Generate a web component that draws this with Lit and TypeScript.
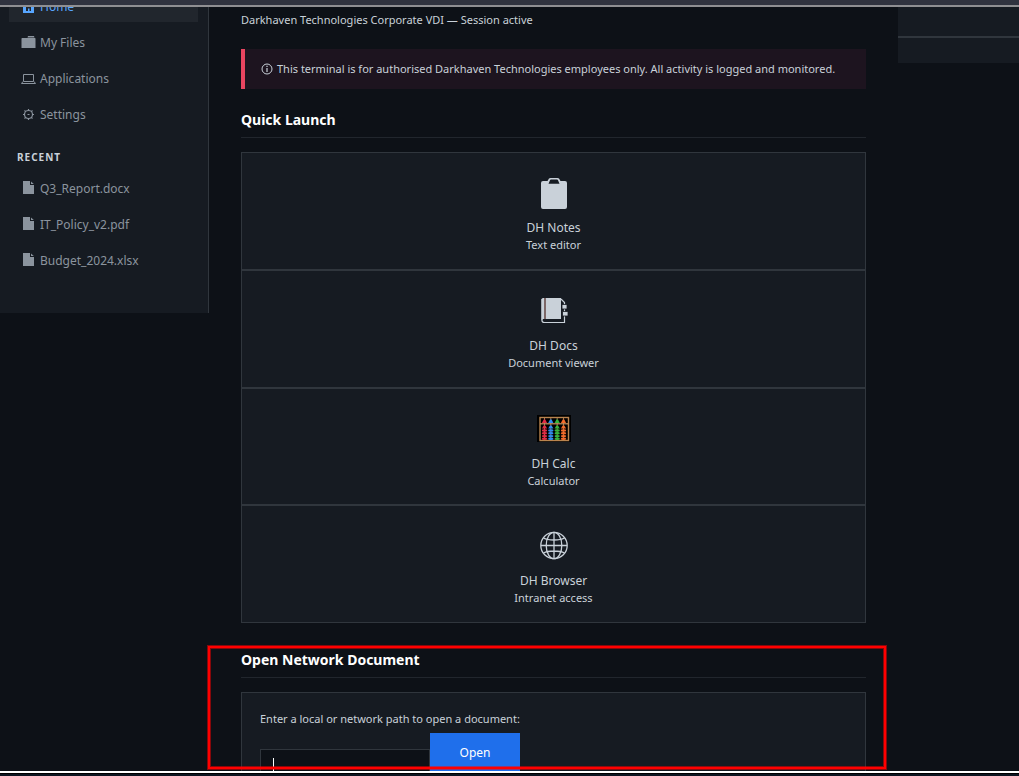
import { LitElement, html, css, svg, TemplateResult } from "lit";
import { customElement } from "lit/decorators.js";

const homeIcon = html`<svg class="nav-icon" viewBox="0 0 16 16" aria-hidden="true">
  <path fill="currentColor" fill-rule="evenodd" d="M7.500 1 .500 8H2v6h11V8h1.500zM5 8h5v4H8.500V9.500H7V12H5z" />
</svg>`;

const folderIcon = html`<svg class="nav-icon" viewBox="0 0 16 16" aria-hidden="true">
  <path fill="currentColor" d="M7 1h6l.500 1.500h-7zM1 3h13l.500.500V13H.500V3.500z" />
</svg>`;

const laptopIcon = html`<svg class="nav-icon" viewBox="0 0 16 16" aria-hidden="true">
  <path fill="none" stroke="currentColor" d="M2.500 10.500v-7h10v7zM.500 12.500h14M2 10.500.500 12.500M13 10.500l1.500 2" />
</svg>`;

const gearIcon = html`<svg class="nav-icon" viewBox="0 0 16 16" aria-hidden="true">
  <circle cx="7.500" cy="7.500" r="4" fill="none" stroke="currentColor" stroke-width="1.200" />
  <path stroke="currentColor" stroke-width="1.200" d="M7.500 2v1.500M7.500 11.500V13M2 7.500h1.500M11.500 7.500H13M3.500 3.500l1.200 1.200M10.300 10.300l1.200 1.200M11.500 3.500l-1.200 1.200M4.700 10.300l-1.200 1.200M6.500 7.500h2" />
</svg>`;

const fileIcon = html`<svg class="nav-icon" viewBox="0 0 16 16" aria-hidden="true">
  <path fill="currentColor" d="M2 0h7v4h4v9H2z" />
  <path fill="currentColor" d="M10 .500 12.800 3H10z" />
</svg>`;

const infoIcon = html`<svg class="info-icon" viewBox="0 0 12 12" aria-hidden="true">
  <circle cx="6" cy="6" r="5" fill="none" stroke="currentColor" />
  <path stroke="currentColor" stroke-width="1.200" d="M6 5v4M6 2.800v1.200" />
</svg>`;

const clipboardIcon = html`<svg class="tile-icon" viewBox="0 0 36 36" aria-hidden="true">
  <path fill="currentColor" fill-rule="evenodd"
    d="M7 5h4.500l1.500-2.500Q13.500 2 14.500 2h7q1 0 1.500.500L24.500 5H29q2 0 2 2v24q0 2-2 2H7q-2 0-2-2V7q0-2 2-2zm5.500 2.800h11L22 4.200q-.200-.600-1-.600h-6q-.800 0-1 .600z" />
</svg>`;

const notebookIcon = html`<svg class="tile-icon" viewBox="0 0 36 36" aria-hidden="true">
  <path fill="none" stroke="currentColor" stroke-width="1.200" d="M6 5v21.500q0 2 2.500 2H28.500V8.500L25 5" />
  <path fill="currentColor" d="M5.500 5.500Q5.500 4 7 4h1.500v21H7l-1.500 1.500zM9.500 4h15.500v21H9.500z" />
  <path stroke="#8a5a52" d="M9 4v21" />
  <path fill="currentColor" stroke="#161b22" stroke-width=".800" d="M26 10.500h5v4.500h-5zM26.500 17.500H32V22h-5.500z" />
</svg>`;

const beadColumns = [
  { x: 8.5, color: "#e12b45" },
  { x: 14.8, color: "#2f8cf0" },
  { x: 21.2, color: "#35b33c" },
  { x: 27.5, color: "#f46a2a" },
];

const abacusIcon = html`<svg class="tile-icon" viewBox="0 0 36 36" aria-hidden="true">
  <rect x="1" y="3" width="34" height="27" fill="#000" />
  <rect x="4" y="5.500" width="28.500" height="23" fill="none" stroke="#b9844f" stroke-width="1.400" />
  <path stroke="#c89461" stroke-width="1.200" d="M4 11.800h28" />
  ${beadColumns.map(
    ({ x, color }) => svg`<g fill=${color}>
      <path stroke="#c89461" stroke-width=".800" d="M${x} 6v22" />
      <path d="M${x - 2.6} 11 ${x - 0.8} 7.500h1.600l1.800 3.500z" />
      <path d="M${x - 2.6} 16.500 ${x - 0.8} 13.500h1.600l1.800 3z" />
      ${[18.5, 21.3, 24.1, 26.7].map((y) => svg`<ellipse cx=${x} cy=${y} rx="2.700" ry="1.200" />`)}
    </g>`
  )}
</svg>`;

const globeIcon = html`<svg class="tile-icon" viewBox="0 0 36 36" aria-hidden="true">
  <g fill="none" stroke="currentColor" stroke-width="1.300">
    <circle cx="18" cy="16.500" r="13.200" />
    <ellipse cx="18" cy="16.500" rx="7.800" ry="13.200" />
    <path d="M18 3.500v26M5 16.500h26M7.500 9q3.500 2 10.500 2t10.500-2M7.500 24Q11 22 18 22t10.500 2" />
  </g>
</svg>`;

interface NavItem {
  label: string;
  icon: TemplateResult;
  active?: boolean;
}

interface Tile {
  name: string;
  detail: string;
  icon: TemplateResult;
}

const places: NavItem[] = [
  { label: "Home", icon: homeIcon, active: true },
  { label: "My Files", icon: folderIcon },
  { label: "Applications", icon: laptopIcon },
  { label: "Settings", icon: gearIcon },
];

const recent: NavItem[] = [
  { label: "Q3_Report.docx", icon: fileIcon },
  { label: "IT_Policy_v2.pdf", icon: fileIcon },
  { label: "Budget_2024.xlsx", icon: fileIcon },
];

const tiles: Tile[] = [
  { name: "DH Notes", detail: "Text editor", icon: clipboardIcon },
  { name: "DH Docs", detail: "Document viewer", icon: notebookIcon },
  { name: "DH Calc", detail: "Calculator", icon: abacusIcon },
  { name: "DH Browser", detail: "Intranet access", icon: globeIcon },
];

@customElement("vdi-sidebar")
export class VdiSidebar extends LitElement {
  static styles = css`
    :host {
      display: block;
      box-sizing: border-box;
      padding: 0 10px 37px 9px;
      background: #161b22;
      border-right: 1px solid #30363d;
      color: #8b949e;
      font-size: 12px;
      line-height: 20px;
    }
    .list {
      display: grid;
      gap: 4px;
      margin: 0;
      padding: 0;
      list-style: none;
    }
    .link {
      display: flex;
      align-items: center;
      gap: 3px;
      padding: 7px 12px 5px;
      color: inherit;
      text-decoration: none;
    }
    .active {
      background: #21262d;
      color: #58a6ff;
    }
    .nav-icon {
      width: 16px;
      height: 16px;
      flex: none;
    }
    .heading {
      margin: 0;
      padding: 19px 8px 7px;
      color: #c9d1d9;
      font-size: 10px;
      line-height: 16px;
      font-weight: 700;
      letter-spacing: 1px;
      text-transform: uppercase;
    }
  `;

  private renderList(items: NavItem[]) {
    return html`<ul class="list">
      ${items.map(
        (item) => html`<li>
          <a class=${item.active ? "link active" : "link"} href="#">${item.icon}<span>${item.label}</span></a>
        </li>`
      )}
    </ul>`;
  }

  render() {
    return html`<nav>
      ${this.renderList(places)}
      <h2 class="heading">Recent</h2>
      ${this.renderList(recent)}
    </nav>`;
  }
}

@customElement("app-root")
export class AppRoot extends LitElement {
  static styles = css`
    :host {
      display: flex;
      flex-direction: column;
      height: 100vh;
      background: #0d1117;
      color: #c9d1d9;
      font-family: "Noto Sans", "Open Sans", sans-serif;
      font-size: 11px;
      line-height: 18px;
    }
    .frame-top {
      flex: none;
      height: 5px;
      background: #30333f;
      border-bottom: 2px solid #8f8f92;
    }
    .frame-bottom {
      flex: none;
      height: 2px;
      background: #0d1521;
      border-top: 2px solid #fff;
      padding-top: 1px;
      box-shadow: inset 0 1px #000;
    }
    .desktop {
      flex: 1;
      min-height: 0;
      overflow: hidden;
      display: grid;
      grid-template-columns: 209px minmax(0, 1fr) 121px;
      align-items: start;
    }
    .sidebar {
      margin-top: -17px;
    }
    .main {
      padding: 4px 32px 32px;
    }
    .subtitle {
      margin: 0 0 20px;
    }
    .alert {
      display: flex;
      align-items: center;
      gap: 4px;
      margin: 0;
      padding: 11px 16px;
      background: #1d141f;
      border-left: 4px solid #e94560;
    }
    .info-icon {
      width: 12px;
      height: 12px;
      flex: none;
    }
    .title {
      margin: 0 0 14px;
      padding: 1px 0 7px;
      border-bottom: 1px solid #21262d;
      color: #fff;
      font-size: 14px;
      line-height: 20px;
      font-weight: 700;
    }
    .launch {
      padding-top: 20px;
    }
    .tiles {
      display: grid;
      grid-auto-rows: 1fr;
      min-height: 471px;
    }
    .tile {
      display: flex;
      flex-direction: column;
      align-items: center;
      padding: 23px 16px 0;
      border: 1px solid #30363d;
      background: #161b22;
      color: inherit;
      font: inherit;
      cursor: pointer;
    }
    .tile-icon {
      width: 36px;
      height: 36px;
      margin-bottom: 7px;
    }
    .tile-name {
      font-size: 12px;
    }
    .tile-detail {
      line-height: 16px;
    }
    .open {
      position: relative;
      padding-top: 26px;
    }
    .panel {
      padding: 17px 18px 24px;
      border: 1px solid #30363d;
      background: #161b22;
    }
    .row {
      position: relative;
      display: flex;
      align-items: flex-start;
      margin-top: 5px;
    }
    .path {
      box-sizing: border-box;
      width: 170px;
      height: 36px;
      margin-top: 16px;
      padding: 8px 12px;
      border: 1px solid #30363d;
      background: #0d1117;
      color: #c9d1d9;
      font: inherit;
    }
    .caret {
      position: absolute;
      left: 13px;
      top: 25px;
      width: 1px;
      height: 16px;
      background: #fff;
    }
    .submit {
      min-width: 90px;
      padding: 10px 16px 8px;
      border: 0;
      background: #1f6feb;
      color: #fff;
      font: inherit;
      font-size: 12px;
      line-height: 20px;
    }
    .highlight {
      position: absolute;
      box-sizing: border-box;
      top: 22px;
      left: -34px;
      right: -21px;
      height: 125px;
      border: 1px solid rgba(255, 0, 0, 0.5);
      box-shadow: inset 0 0 0 2px #f00, inset 0 0 0 3px rgba(255, 0, 0, 0.5);
      pointer-events: none;
    }
    .side-panel {
      height: 29px;
      border-bottom: 2px solid #30363d;
      background: #161b22;
    }
    .side-foot {
      height: 25px;
      background: #161b22;
    }
  `;

  render() {
    return html`
      <div class="frame-top"></div>
      <div class="desktop">
        <vdi-sidebar class="sidebar"></vdi-sidebar>
        <main class="main">
          <p class="subtitle">Darkhaven Technologies Corporate VDI — Session active</p>
          <p class="alert">
            ${infoIcon}<span>This terminal is for authorised Darkhaven Technologies employees only. All activity is logged and monitored.</span>
          </p>
          <section class="launch">
            <h2 class="title">Quick Launch</h2>
            <div class="tiles">
              ${tiles.map(
                (tile) => html`<button class="tile" type="button">
                  ${tile.icon}
                  <span class="tile-name">${tile.name}</span>
                  <span class="tile-detail">${tile.detail}</span>
                </button>`
              )}
            </div>
          </section>
          <section class="open">
            <h2 class="title">Open Network Document</h2>
            <div class="panel">
              <label for="path">Enter a local or network path to open a document:</label>
              <div class="row">
                <input class="path" id="path" type="text" />
                <span class="caret"></span>
                <button class="submit" type="button">Open</button>
              </div>
            </div>
            <div class="highlight"></div>
          </section>
        </main>
        <aside>
          <div class="side-panel"></div>
          <div class="side-foot"></div>
        </aside>
      </div>
      <div class="frame-bottom"></div>
    `;
  }
}
